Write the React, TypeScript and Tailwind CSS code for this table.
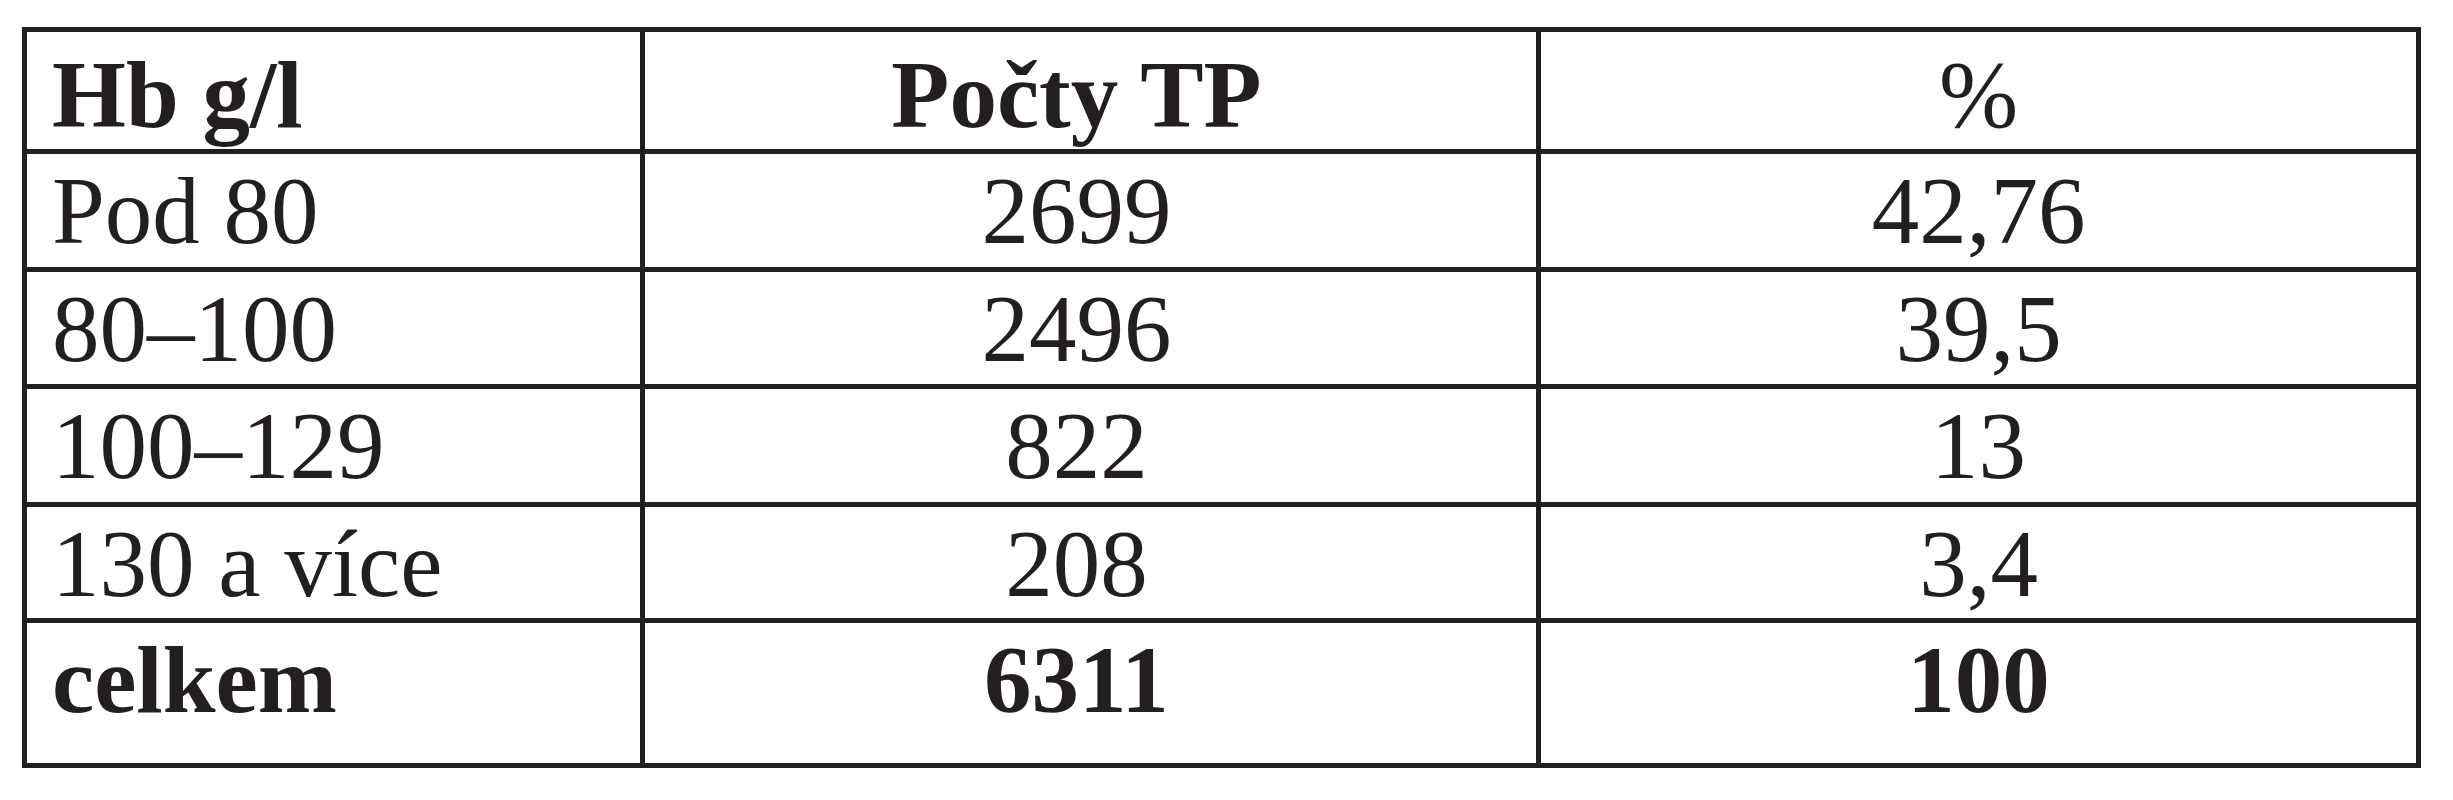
import React from 'react';

type Row = { label: string; count: string; pct: string; bold?: boolean };

const ROWS: Row[] = [
  { label: 'Pod 80', count: '2699', pct: '42,76' },
  { label: '80–100', count: '2496', pct: '39,5' },
  { label: '100–129', count: '822', pct: '13' },
  { label: '130 a více', count: '208', pct: '3,4' },
  { label: 'celkem', count: '6311', pct: '100', bold: true },
];

const cell = 'bg-white text-[95px] leading-[95px] text-[#231f20] whitespace-nowrap';

const App: React.FC = () => {
  return (
    <div className="w-[2453px] h-[800px] bg-white pl-[22px] pt-[27px] font-['Liberation_Serif','Times_New_Roman',serif]">
      <div className="grid w-[2399px] grid-cols-[613px_891px_875px] grid-rows-[117px_113px_112px_113px_111px_140px] gap-[5px] bg-[#231f20] p-[5px]">
        {/* header */}
        <div className={`${cell} pl-[25px] pt-[16px] font-bold`}>Hb g/l</div>
        <div className={`${cell} pr-[28px] pt-[16px] text-center font-bold`}>Počty TP</div>
        <div className={`${cell} pt-[16px] text-center`}>%</div>

        {ROWS.map((r) => (
          <React.Fragment key={r.label}>
            <div className={`${cell} pl-[25px] pt-[10px] ${r.bold ? 'font-bold' : ''}`}>{r.label}</div>
            <div className={`${cell} pr-[28px] pt-[10px] text-center ${r.bold ? 'font-bold' : ''}`}>{r.count}</div>
            <div className={`${cell} pt-[10px] text-center ${r.bold ? 'font-bold' : ''}`}>{r.pct}</div>
          </React.Fragment>
        ))}
      </div>
    </div>
  );
};

export default App;
